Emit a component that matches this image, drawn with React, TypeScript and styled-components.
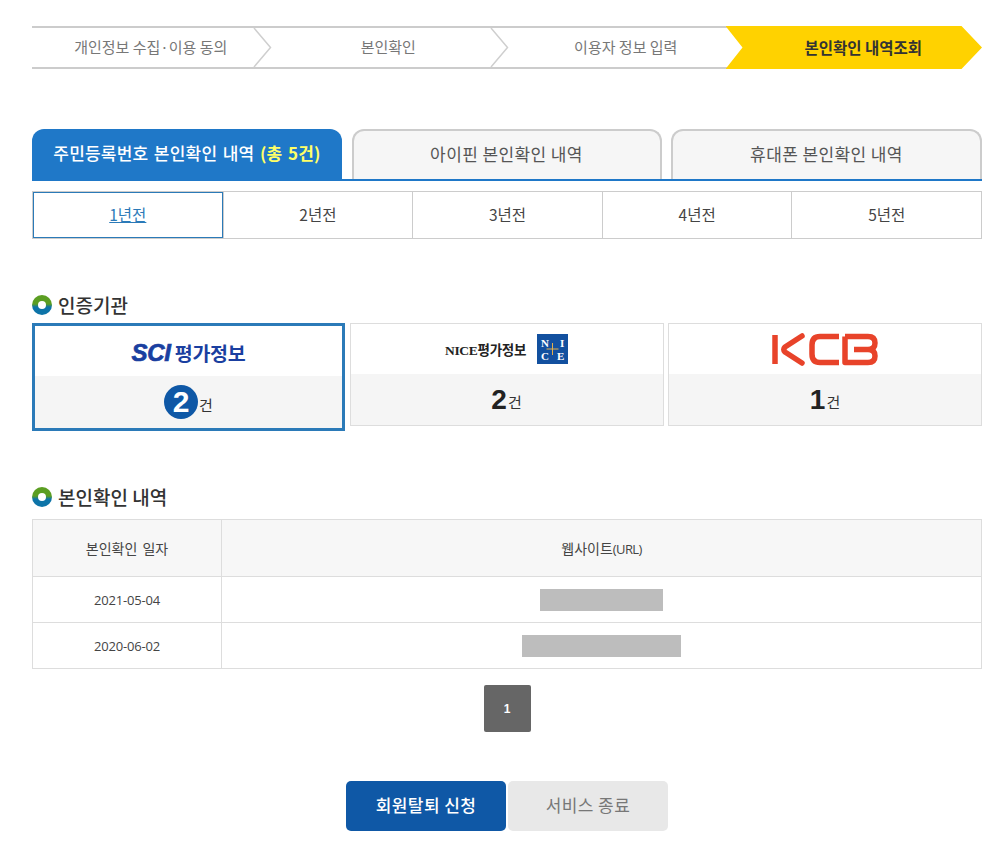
import { createGlobalStyle } from "styled-components";
import styled from "styled-components";

const GlobalStyle = createGlobalStyle`
  html, body {
    margin: 0;
    padding: 0;
    background: #fff;
    font-family: "Noto Sans CJK KR", "Noto Sans", sans-serif;
    color: #333;
  }
`;

const steps = ["개인정보 수집·이용 동의", "본인확인", "이용자 정보 입력"];
const tabs = ["아이핀 본인확인 내역", "휴대폰 본인확인 내역"];
const years = ["1년전", "2년전", "3년전", "4년전", "5년전"];

function Chevron() {
  return (
    <ChevronIcon viewBox="0 0 19 39" width="19" height="39">
      <path d="M1 0 L17.5 19.5 L1 39" fill="none" stroke="#cfcfcf" strokeWidth="1.5" />
    </ChevronIcon>
  );
}

function Ring() {
  return <RingIcon />;
}

function NiceMark() {
  return (
    <svg width="31" height="30" viewBox="0 0 31 30">
      <rect width="31" height="30" fill="#12509f" />
      <path d="M15.5 9 V21 M9.5 15 H21.5" stroke="#e3b04b" strokeWidth="1" />
      <NiceLetter x="4" y="13">N</NiceLetter>
      <NiceLetter x="23" y="13">I</NiceLetter>
      <NiceLetter x="4" y="26">C</NiceLetter>
      <NiceLetter x="20" y="26">E</NiceLetter>
    </svg>
  );
}

function KcbLogo() {
  return (
    <svg width="108" height="33" viewBox="0 0 108 33">
      <g fill="none" stroke="#e8432a" strokeWidth="5.5" strokeLinecap="round" strokeLinejoin="round">
        <path d="M4 2 V31" strokeLinecap="butt" />
        <path d="M31 3 L14 14 Q11.5 16.5 14 19 L31 30" />
        <path d="M68 3.5 H49 Q41 3.5 41 12 V21 Q41 29.5 49 29.5 H68" strokeLinecap="butt" />
        <path d="M74 3.5 H97 Q104 3.5 104 10 Q104 16.5 97 16.5 H83 M97 16.5 Q104 16.5 104 23 Q104 29.5 97 29.5 H74 V3.5" strokeLinecap="butt" />
      </g>
    </svg>
  );
}

export default function App() {
  return (
    <Page>
      <GlobalStyle />
      <Stepper>
        {steps.map((step) => (
          <Step key={step}>
            {step}
            <Chevron />
          </Step>
        ))}
        <ActiveStep>본인확인 내역조회</ActiveStep>
      </Stepper>

      <Tabs>
        <ActiveTab>
          주민등록번호 본인확인 내역 <em>(총 5건)</em>
        </ActiveTab>
        {tabs.map((tab) => (
          <Tab key={tab}>{tab}</Tab>
        ))}
      </Tabs>

      <YearRow>
        {years.map((year, i) => (
          <YearCell key={year} $active={i === 0}>
            {i === 0 ? <u>{year}</u> : year}
          </YearCell>
        ))}
      </YearRow>

      <SectionTitle $gap={8}>
        <Ring />
        인증기관
      </SectionTitle>
      <Agencies>
        <Agency $active>
          <AgencyLogo>
            <SciName>
              <b>SCI</b> 평가정보
            </SciName>
          </AgencyLogo>
          <AgencyCount>
            <CountBadge>2</CountBadge>
            <Unit>건</Unit>
          </AgencyCount>
        </Agency>
        <Agency>
          <AgencyLogo>
            <NiceName>NICE평가정보</NiceName>
            <NiceMark />
          </AgencyLogo>
          <AgencyCount>
            <CountNumber>2</CountNumber>
            <Unit>건</Unit>
          </AgencyCount>
        </Agency>
        <Agency>
          <AgencyLogo>
            <KcbLogo />
          </AgencyLogo>
          <AgencyCount>
            <CountNumber>1</CountNumber>
            <Unit>건</Unit>
          </AgencyCount>
        </Agency>
      </Agencies>

      <SectionTitle $gap={12}>
        <Ring />
        본인확인 내역
      </SectionTitle>
      <HistoryTable>
        <colgroup>
          <col width="189" />
          <col />
        </colgroup>
        <thead>
          <tr>
            <th>본인확인 일자</th>
            <th>
              웹사이트<UrlLabel>(URL)</UrlLabel>
            </th>
          </tr>
        </thead>
        <tbody>
          <tr>
            <DateCell>2021-05-04</DateCell>
            <td>
              <Redacted $width={123} />
            </td>
          </tr>
          <tr>
            <DateCell>2020-06-02</DateCell>
            <td>
              <Redacted $width={159} />
            </td>
          </tr>
        </tbody>
      </HistoryTable>

      <Pager>
        <PageButton>1</PageButton>
      </Pager>

      <Actions>
        <PrimaryButton>회원탈퇴 신청</PrimaryButton>
        <SecondaryButton>서비스 종료</SecondaryButton>
      </Actions>
    </Page>
  );
}

const Page = styled.div`
  width: 950px;
  padding: 26px 14px 23px 32px;
`;

const Stepper = styled.div`
  display: grid;
  grid-template-columns: repeat(4, 1fr);
  height: 43px;
`;

const Step = styled.div`
  position: relative;
  display: flex;
  align-items: center;
  justify-content: center;
  padding-bottom: 2px;
  border-top: 2px solid #cccccc;
  border-bottom: 2px solid #cccccc;
  font-size: 15px;
  color: #777;
`;

const ChevronIcon = styled.svg`
  position: absolute;
  right: -2px;
  top: 0;
`;

const ActiveStep = styled.div`
  display: flex;
  align-items: center;
  justify-content: center;
  margin-left: -19px;
  padding: 0 0 2px 19px;
  background: #ffd200;
  clip-path: polygon(0 0, 236px 0, 100% 50%, 236px 100%, 0 100%, 17px 50%);
  font-size: 15.5px;
  font-weight: 700;
  color: #333;
`;

const Tabs = styled.div`
  display: grid;
  grid-template-columns: 310px 310px 311px;
  grid-template-rows: 50px;
  gap: 9.5px;
  box-sizing: border-box;
  margin-top: 60px;
  height: 52px;
  border-bottom: 2px solid #1f78c8;
`;

const Tab = styled.div`
  display: flex;
  align-items: center;
  justify-content: center;
  padding-bottom: 4px;
  border: 2px solid #cccccc;
  border-bottom: 0;
  border-radius: 12px 12px 0 0;
  background: #f6f6f6;
  font-size: 17px;
  letter-spacing: 0.4px;
  color: #555;
`;

const ActiveTab = styled.div`
  display: flex;
  align-items: center;
  justify-content: center;
  box-sizing: border-box;
  height: 52px;
  padding-bottom: 5px;
  border-radius: 12px 12px 0 0;
  background: #1f78c8;
  font-size: 17px;
  font-weight: 500;
  letter-spacing: 0.2px;
  word-spacing: 1.5px;
  color: #fff;
  white-space: pre;

  em {
    font-style: normal;
    font-weight: 700;
    color: #ffff66;
  }
`;

const YearRow = styled.div`
  display: grid;
  grid-template-columns: repeat(5, 1fr);
  margin-top: 10px;
  height: 48px;
  box-sizing: border-box;
  border: 1px solid #cccccc;
`;

const YearCell = styled.div<{ $active?: boolean }>`
  display: flex;
  align-items: center;
  justify-content: center;
  padding-bottom: 3px;
  font-size: 15.5px;
  color: ${(p) => (p.$active ? "#2b7ab8" : "#444")};
  border-left: 1px solid #cccccc;
  ${(p) => p.$active && "border: 1.5px solid #2b7ab8;"}

  &:first-child {
    border-left-color: ${(p) => (p.$active ? "#2b7ab8" : "transparent")};
  }
`;

const SectionTitle = styled.h3<{ $gap: number }>`
  display: flex;
  align-items: center;
  gap: 6px;
  height: 20px;
  margin: 56px 0 ${(p) => p.$gap}px;
  font-size: 19px;
  font-weight: 500;
  line-height: 18px;
  color: #333;
`;

const RingIcon = styled.span`
  position: relative;
  flex: none;
  width: 20px;
  height: 20px;
  border-radius: 50%;
  background: linear-gradient(#5b9e22 45%, #0d74a8 60%);

  &::after {
    content: "";
    position: absolute;
    top: 6px;
    left: 6px;
    width: 8px;
    height: 8px;
    border-radius: 50%;
    background: #fff;
  }
`;

const Agencies = styled.div`
  display: grid;
  grid-template-columns: 313px 314px 314px;
  gap: 4.5px;
  align-items: start;
`;

const Agency = styled.div<{ $active?: boolean }>`
  display: flex;
  flex-direction: column;
  box-sizing: border-box;
  height: ${(p) => (p.$active ? "108px" : "103px")};
  border: ${(p) => (p.$active ? "3px solid #2b7ab8" : "1px solid #dddddd")};
`;

const AgencyLogo = styled.div`
  display: flex;
  align-items: center;
  justify-content: center;
  gap: 11px;
  flex: none;
  height: 50px;
`;

const AgencyCount = styled.div`
  flex: 1;
  display: flex;
  align-items: center;
  justify-content: center;
  gap: 1px;
  background: #f5f5f5;
`;

const CountNumber = styled.span`
  font-family: "Liberation Sans", sans-serif;
  font-size: 28px;
  font-weight: 700;
  color: #222;
`;

const CountBadge = styled.span`
  display: flex;
  align-items: center;
  justify-content: center;
  width: 34px;
  height: 34px;
  border-radius: 50%;
  background: #0f58a6;
  font-family: "Liberation Sans", sans-serif;
  font-size: 30px;
  font-weight: 700;
  color: #fff;
`;

const Unit = styled.span`
  align-self: center;
  margin-top: 4px;
  font-size: 15px;
  color: #333;
`;

const SciName = styled.div`
  padding-top: 3px;
  font-size: 19.5px;
  font-weight: 700;
  color: #1a3fa0;
  letter-spacing: -0.3px;

  b {
    font-family: "Liberation Sans", sans-serif;
    font-size: 24px;
    font-style: italic;
    font-weight: 700;
    -webkit-text-stroke: 0.7px #1a3fa0;
  }
`;

const NiceName = styled.div`
  font-family: "Liberation Serif", "Noto Sans CJK KR", serif;
  font-size: 13.5px;
  font-weight: 700;
  color: #222;
  letter-spacing: -0.3px;
`;

const NiceLetter = styled.text`
  font-family: "Liberation Serif", serif;
  font-size: 11px;
  font-weight: 700;
  fill: #fff;
`;

const HistoryTable = styled.table`
  width: 950px;
  height: 150px;
  border-collapse: collapse;
  table-layout: fixed;
  font-size: 14px;
  word-spacing: 2px;
  color: #444;

  th,
  td {
    border: 1px solid #dddddd;
    padding: 0;
    text-align: center;
    vertical-align: middle;
  }

  th {
    height: 56px;
    font-weight: 400;
    background: #f7f7f7;
  }

  td {
    height: 45px;
  }
`;

const UrlLabel = styled.span`
  font-family: "Open Sans", sans-serif;
  font-size: 13px;
  letter-spacing: -0.6px;
`;

const DateCell = styled.td`
  font-family: "Open Sans", sans-serif;
  font-size: 13px;
  letter-spacing: -0.2px;
`;

const Redacted = styled.span<{ $width: number }>`
  display: block;
  width: ${(p) => p.$width}px;
  height: 22px;
  margin: 1px auto 0;
  background: #bdbdbd;
`;

const Pager = styled.div`
  display: flex;
  justify-content: center;
  margin-top: 16px;
`;

const PageButton = styled.a`
  display: flex;
  align-items: center;
  justify-content: center;
  width: 47px;
  height: 47px;
  border-radius: 2px;
  background: #666666;
  font-family: "Liberation Sans", sans-serif;
  font-size: 12px;
  font-weight: 700;
  color: #fff;
`;

const Actions = styled.div`
  display: flex;
  justify-content: center;
  gap: 2px;
  margin-top: 49px;
`;

const PrimaryButton = styled.button`
  width: 160px;
  height: 50px;
  padding: 0 0 3px;
  border: 0;
  border-radius: 5px;
  background: #0f58a6;
  font-family: inherit;
  font-size: 17px;
  font-weight: 500;
  letter-spacing: 0.4px;
  color: #fff;
`;

const SecondaryButton = styled(PrimaryButton)`
  background: #e8e8e8;
  font-weight: 400;
  color: #777;
`;
